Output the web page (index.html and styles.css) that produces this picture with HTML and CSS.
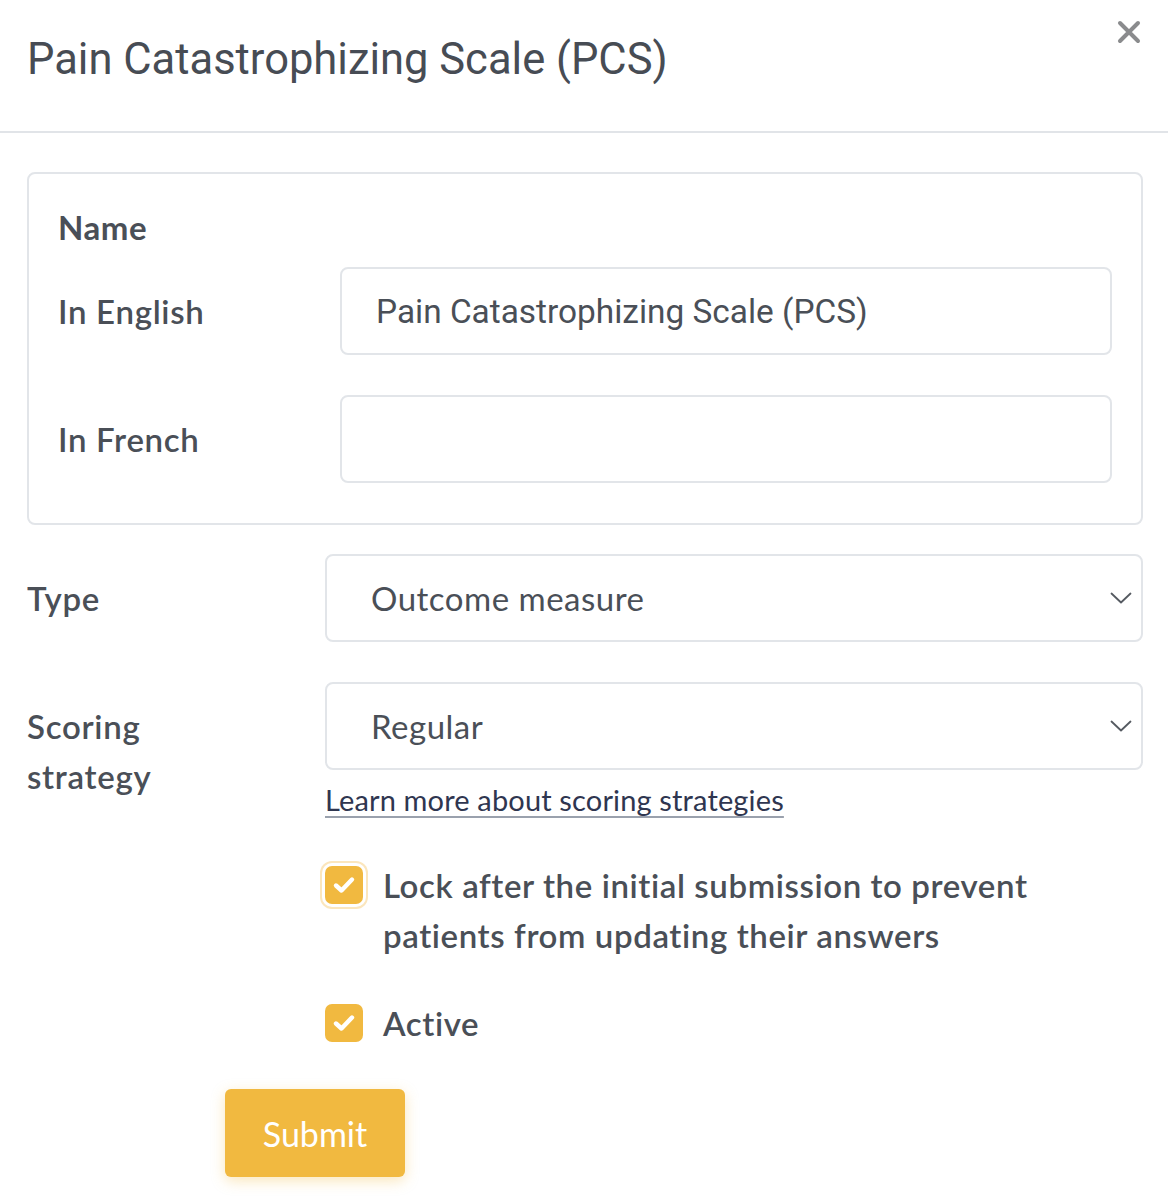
FILE: index.html
```html
<!DOCTYPE html>
<html lang="en">
<head>
    <meta charset="UTF-8">
    <title>Pain Catastrophizing Scale (PCS)</title>
    <link rel="stylesheet" href="styles.css">
</head>
<body>

<div class="modal">
    <div class="modal-header">
        <h1 class="modal-title">Pain Catastrophizing Scale (PCS)</h1>
        <a class="close" href="#" aria-label="Close">
            <svg width="24" height="24" viewBox="0 0 24 24">
                <path d="M3 3 L21 21 M21 3 L3 21" stroke="#8a8b8d" stroke-width="4" stroke-linecap="round"/>
            </svg>
        </a>
    </div>

    <form class="modal-body">
        <fieldset class="name-box">
            <div class="legend">Name</div>
            <div class="row">
                <label class="label">In English</label>
                <div class="input">Pain Catastrophizing Scale (PCS)</div>
            </div>
            <div class="row">
                <label class="label">In French</label>
                <div class="input"></div>
            </div>
        </fieldset>

        <div class="field">
            <label class="label">Type</label>
            <div class="control">
                <div class="select">
                    <span>Outcome measure</span>
                    <svg class="chevron" width="22" height="12" viewBox="0 0 22 12">
                        <path d="M1.5 1.5 L11 10.5 L20.5 1.5" fill="none" stroke="#555a61" stroke-width="1.8" stroke-linecap="round" stroke-linejoin="round"/>
                    </svg>
                </div>
            </div>
        </div>

        <div class="field">
            <label class="label multi">Scoring<br>strategy</label>
            <div class="control">
                <div class="select">
                    <span>Regular</span>
                    <svg class="chevron" width="22" height="12" viewBox="0 0 22 12">
                        <path d="M1.5 1.5 L11 10.5 L20.5 1.5" fill="none" stroke="#555a61" stroke-width="1.8" stroke-linecap="round" stroke-linejoin="round"/>
                    </svg>
                </div>
                <a class="help-link" href="#">Learn more about scoring strategies</a>

                <div class="check focus">
                    <span class="box">
                        <svg width="24" height="20" viewBox="0 0 24 20">
                            <path d="M4 10.5 L9.5 15.5 L20 4.5" fill="none" stroke="#fff" stroke-width="4.4" stroke-linecap="round" stroke-linejoin="round"/>
                        </svg>
                    </span>
                    <span class="check-text">Lock after the initial submission to prevent patients from updating their answers</span>
                </div>

                <div class="check">
                    <span class="box">
                        <svg width="24" height="20" viewBox="0 0 24 20">
                            <path d="M4 10.5 L9.5 15.5 L20 4.5" fill="none" stroke="#fff" stroke-width="4.4" stroke-linecap="round" stroke-linejoin="round"/>
                        </svg>
                    </span>
                    <span class="check-text">Active</span>
                </div>
            </div>
        </div>

        <a class="btn-submit" href="#">Submit</a>
    </form>
</div>

</body>
</html>
```

FILE: styles.css
```css
body {
    margin: 0;
    background: #fff;
    color: #4a4f57;
    font-family: Lato, "Noto Sans", sans-serif;
}

a {
    text-decoration: none;
}

.modal {
    width: 1168px;
}

.modal-header {
    display: flex;
    justify-content: space-between;
    align-items: flex-start;
    height: 133px;
    border-bottom: 2px solid #e1e4e8;
    box-sizing: border-box;
}

.modal-title {
    margin: 34px 0 0 27px;
    font-family: Roboto, "Liberation Sans", sans-serif;
    font-weight: 400;
    font-size: 43.5px;
    line-height: 52px;
    color: #474c54;
}

.close {
    margin: 20px 27px 0 0;
    line-height: 0;
}

.modal-body {
    padding: 39px 25px 40px 27px;
}

.name-box {
    margin: 0;
    padding: 28px 29px 40px 29px;
    border: 2px solid #e2e5e9;
    border-radius: 8px;
}

.legend {
    font-size: 33px;
    font-weight: 700;
    line-height: 50px;
    letter-spacing: .5px;
    margin-bottom: 15px;
}

.label {
    font-size: 33px;
    font-weight: 600;
    line-height: 50px;
    letter-spacing: .7px;
}

.name-box .row {
    display: grid;
    grid-template-columns: 282px 1fr;
    align-items: center;
}

.name-box .row + .row {
    margin-top: 40px;
}

.input {
    height: 88px;
    box-sizing: border-box;
    border: 2px solid #e2e5e9;
    border-radius: 8px;
    padding: 0 34px;
    display: flex;
    align-items: center;
    font-family: Roboto, "Liberation Sans", sans-serif;
    font-size: 33.4px;
    color: #4a4f57;
}

.field {
    display: grid;
    grid-template-columns: 298px 1fr;
    margin-top: 29px;
}

.field + .field {
    margin-top: 40px;
}

.field > .label {
    padding-top: 19px;
}

.select {
    height: 88px;
    box-sizing: border-box;
    border: 2px solid #e2e5e9;
    border-radius: 8px;
    padding: 0 9px 0 44px;
    display: flex;
    align-items: center;
    justify-content: space-between;
    font-size: 33px;
    letter-spacing: .5px;
    color: #4a4f57;
}

.help-link {
    display: inline-block;
    margin-top: 10px;
    font-size: 29px;
    letter-spacing: .15px;
    line-height: 40px;
    color: #2f3650;
    text-decoration: underline;
    text-decoration-color: #9aa1ad;
    text-underline-offset: 5px;
}

.check {
    display: flex;
    align-items: flex-start;
    margin-top: 40px;
    font-size: 33px;
    font-weight: 600;
    letter-spacing: .6px;
    line-height: 50px;
}

.check + .check {
    margin-top: 38px;
}

.box {
    flex: none;
    width: 38px;
    height: 38px;
    margin: 6px 20px 0 0;
    border-radius: 7px;
    background: #f1b940;
    display: flex;
    align-items: center;
    justify-content: center;
}

.focus .box {
    box-shadow: 0 0 0 3px #fff, 0 0 0 5px #fbe6bd;
}

.check-text {
    max-width: 700px;
}

.btn-submit {
    display: inline-flex;
    align-items: center;
    justify-content: center;
    width: 180px;
    height: 88px;
    margin: 41px 0 0 198px;
    border-radius: 6px;
    background: #f1b940;
    color: #fff;
    font-size: 34px;
    box-shadow: 0 4px 14px rgba(241, 185, 64, .35);
}
```
